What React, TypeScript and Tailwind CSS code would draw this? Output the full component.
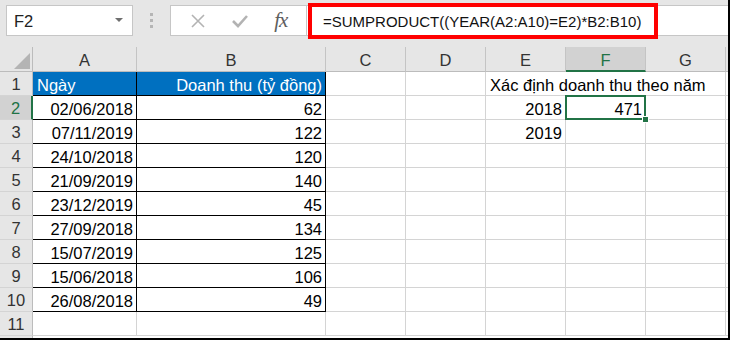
import React from "react";

type Cell = { text?: string; align?: "left" | "right"; kind?: "head" | "data" | "plain" | "overflow" | "nogrid" };

const widths = ["w-[104px]", "w-[189px]", "w-[80px]", "w-[80px]", "w-[80px]", "w-[80px]", "w-[80px]"];
const letters = ["A", "B", "C", "D", "E", "F", "G"];

const data: [string, string][] = [
  ["02/06/2018", "62"],
  ["07/11/2019", "122"],
  ["24/10/2018", "120"],
  ["21/09/2019", "140"],
  ["23/12/2019", "45"],
  ["27/09/2018", "134"],
  ["15/07/2019", "125"],
  ["15/06/2018", "106"],
  ["26/08/2018", "49"],
];

function buildRow(r: number): Cell[] {
  const cells: Cell[] = Array.from({ length: 7 }, () => ({ kind: "plain" as const }));
  if (r === 1) {
    cells[0] = { text: "Ngày", align: "left", kind: "head" };
    cells[1] = { text: "Doanh thu (tỷ đồng)", align: "right", kind: "head" };
    cells[4] = { text: "Xác định doanh thu theo năm", align: "left", kind: "overflow" };
    cells[5] = { kind: "nogrid" };
  } else if (r <= 10) {
    const [d, v] = data[r - 2];
    cells[0] = { text: d, align: "right", kind: "data" };
    cells[1] = { text: v, align: "right", kind: "data" };
  }
  if (r === 2) {
    cells[4] = { text: "2018", align: "right", kind: "plain" };
    cells[5] = { text: "471", align: "right", kind: "plain" };
  }
  if (r === 3) cells[4] = { text: "2019", align: "right", kind: "plain" };
  return cells;
}

function GridCell({ cell, col, row }: { cell: Cell; col: number; row: number }) {
  const base = `${widths[col]} h-[24px] shrink-0 flex items-center pt-[3px] relative`;
  const align = cell.align === "left" ? "justify-start pl-[4px]" : "justify-end pr-[3px]";
  let look = "border-r border-b border-[#d4d4d4] bg-white text-black";
  if (cell.kind === "head") look = "border-r border-b border-black bg-[#0070c0] text-white";
  if (cell.kind === "data") look = "border-r border-b border-black bg-white text-black";
  if (cell.kind === "overflow") look = "border-b border-[#d4d4d4] bg-white text-black z-10";
  if (cell.kind === "nogrid") look = "border-r-0 border-b border-[#d4d4d4] bg-white";
  const selected = row === 2 && col === 5;
  return (
    <div className={`${base} ${align} ${look}`}>
      {cell.text && <span className="whitespace-nowrap">{cell.text}</span>}
      {selected && (
        <div className="absolute -left-[1px] -top-[1px] w-[81px] h-[25px] border-2 border-[#217346] pointer-events-none z-20">
          <div className="absolute -right-[5px] -bottom-[5px] w-[7px] h-[7px] bg-[#217346] border border-white" />
        </div>
      )}
    </div>
  );
}

function Row({ r }: { r: number }) {
  const cells = buildRow(r);
  const active = r === 2;
  return (
    <div className="flex h-[24px]">
      <div
        className={`w-[33px] shrink-0 flex items-center justify-center pt-[2px] border-b border-[#d4d4d4] ${
          active ? "bg-[#d2d2d2] text-[#217346] border-r-2 border-r-[#217346]" : "bg-[#e6e6e6] text-[#333] border-r border-r-[#bcbcbc]"
        }`}
      >
        {r}
      </div>
      {cells.map((c, i) => (
        <GridCell key={i} cell={c} col={i} row={r} />
      ))}
      <div className="flex-1 h-[24px] border-b border-[#d4d4d4] bg-white" />
    </div>
  );
}

export default function App() {
  return (
    <div
      className="w-[730px] h-[340px] overflow-hidden bg-white border-r-2 border-b-2 border-black text-[16.5px]"
      style={{ fontFamily: '"Liberation Sans", Arial, sans-serif' }}
    >
      {/* formula bar */}
      <div className="h-[47px] bg-[#e6e6e6] flex items-start pt-[5px]">
        <div className="ml-[6px] w-[127px] h-[31px] bg-white border border-[#c6c6c6] flex items-center justify-between pl-[7px] pr-[9px]">
          <span className="text-[#222] pt-[2px]">F2</span>
          <svg width="8" height="5" viewBox="0 0 8 5">
            <path d="M0 0 L8 0 L4 4 Z" fill="#6f6f6f" />
          </svg>
        </div>
        <div className="w-[37px] h-[31px] flex flex-col items-center justify-center gap-[3px]">
          <div className="w-[3px] h-[3px] bg-[#b5b5b5]" />
          <div className="w-[3px] h-[3px] bg-[#b5b5b5]" />
          <div className="w-[3px] h-[3px] bg-[#b5b5b5]" />
        </div>
        <div className="w-[137px] h-[31px] bg-white border border-[#c6c6c6] flex items-center justify-around px-[6px]">
          <svg width="16" height="16" viewBox="0 0 16 16">
            <path d="M2 2 L14 14 M14 2 L2 14" stroke="#b3b3b3" strokeWidth="1.6" />
          </svg>
          <svg width="18" height="16" viewBox="0 0 18 16">
            <path d="M2 8 L7 13 L16 3" stroke="#b3b3b3" strokeWidth="2.6" fill="none" />
          </svg>
          <span
            className="italic text-[#5e5e5e] text-[21px] tracking-[-1px]"
            style={{ fontFamily: '"Liberation Serif", "Times New Roman", serif' }}
          >
            fx
          </span>
        </div>
        <div className="flex-1 h-[31px] bg-white border-y border-[#c6c6c6] relative">
          <div className="absolute left-[1px] -top-[3px] w-[350px] h-[36px] border-4 border-[#ff0000] flex items-center pl-[11px] pt-[2px] text-[15px] text-[#111]">
            =SUMPRODUCT((YEAR(A2:A10)=E2)*B2:B10)
          </div>
        </div>
      </div>

      {/* column headers */}
      <div className="flex h-[25px] bg-[#e6e6e6]">
        <div className="w-[33px] shrink-0 border-r border-b border-[#bcbcbc] relative">
          <svg className="absolute right-[2px] bottom-[2px]" width="16" height="16" viewBox="0 0 16 16">
            <path d="M16 0 L16 16 L0 16 Z" fill="#b4b4b4" />
          </svg>
        </div>
        {letters.map((l, i) => (
          <div
            key={l}
            className={`${widths[i]} shrink-0 flex items-center justify-center pt-[3px] border-r border-[#c4c4c4] ${
              l === "F" ? "bg-[#d2d2d2] text-[#217346] border-b-2 border-b-[#217346]" : "text-[#333] border-b border-b-[#bcbcbc]"
            }`}
          >
            {l}
          </div>
        ))}
        <div className="flex-1 border-b border-[#bcbcbc]" />
      </div>

      {Array.from({ length: 11 }, (_, i) => (
        <Row key={i} r={i + 1} />
      ))}
      <div className="flex h-[2px]">
        <div className="w-[33px] bg-[#e6e6e6] border-r border-[#bcbcbc]" />
      </div>
    </div>
  );
}
